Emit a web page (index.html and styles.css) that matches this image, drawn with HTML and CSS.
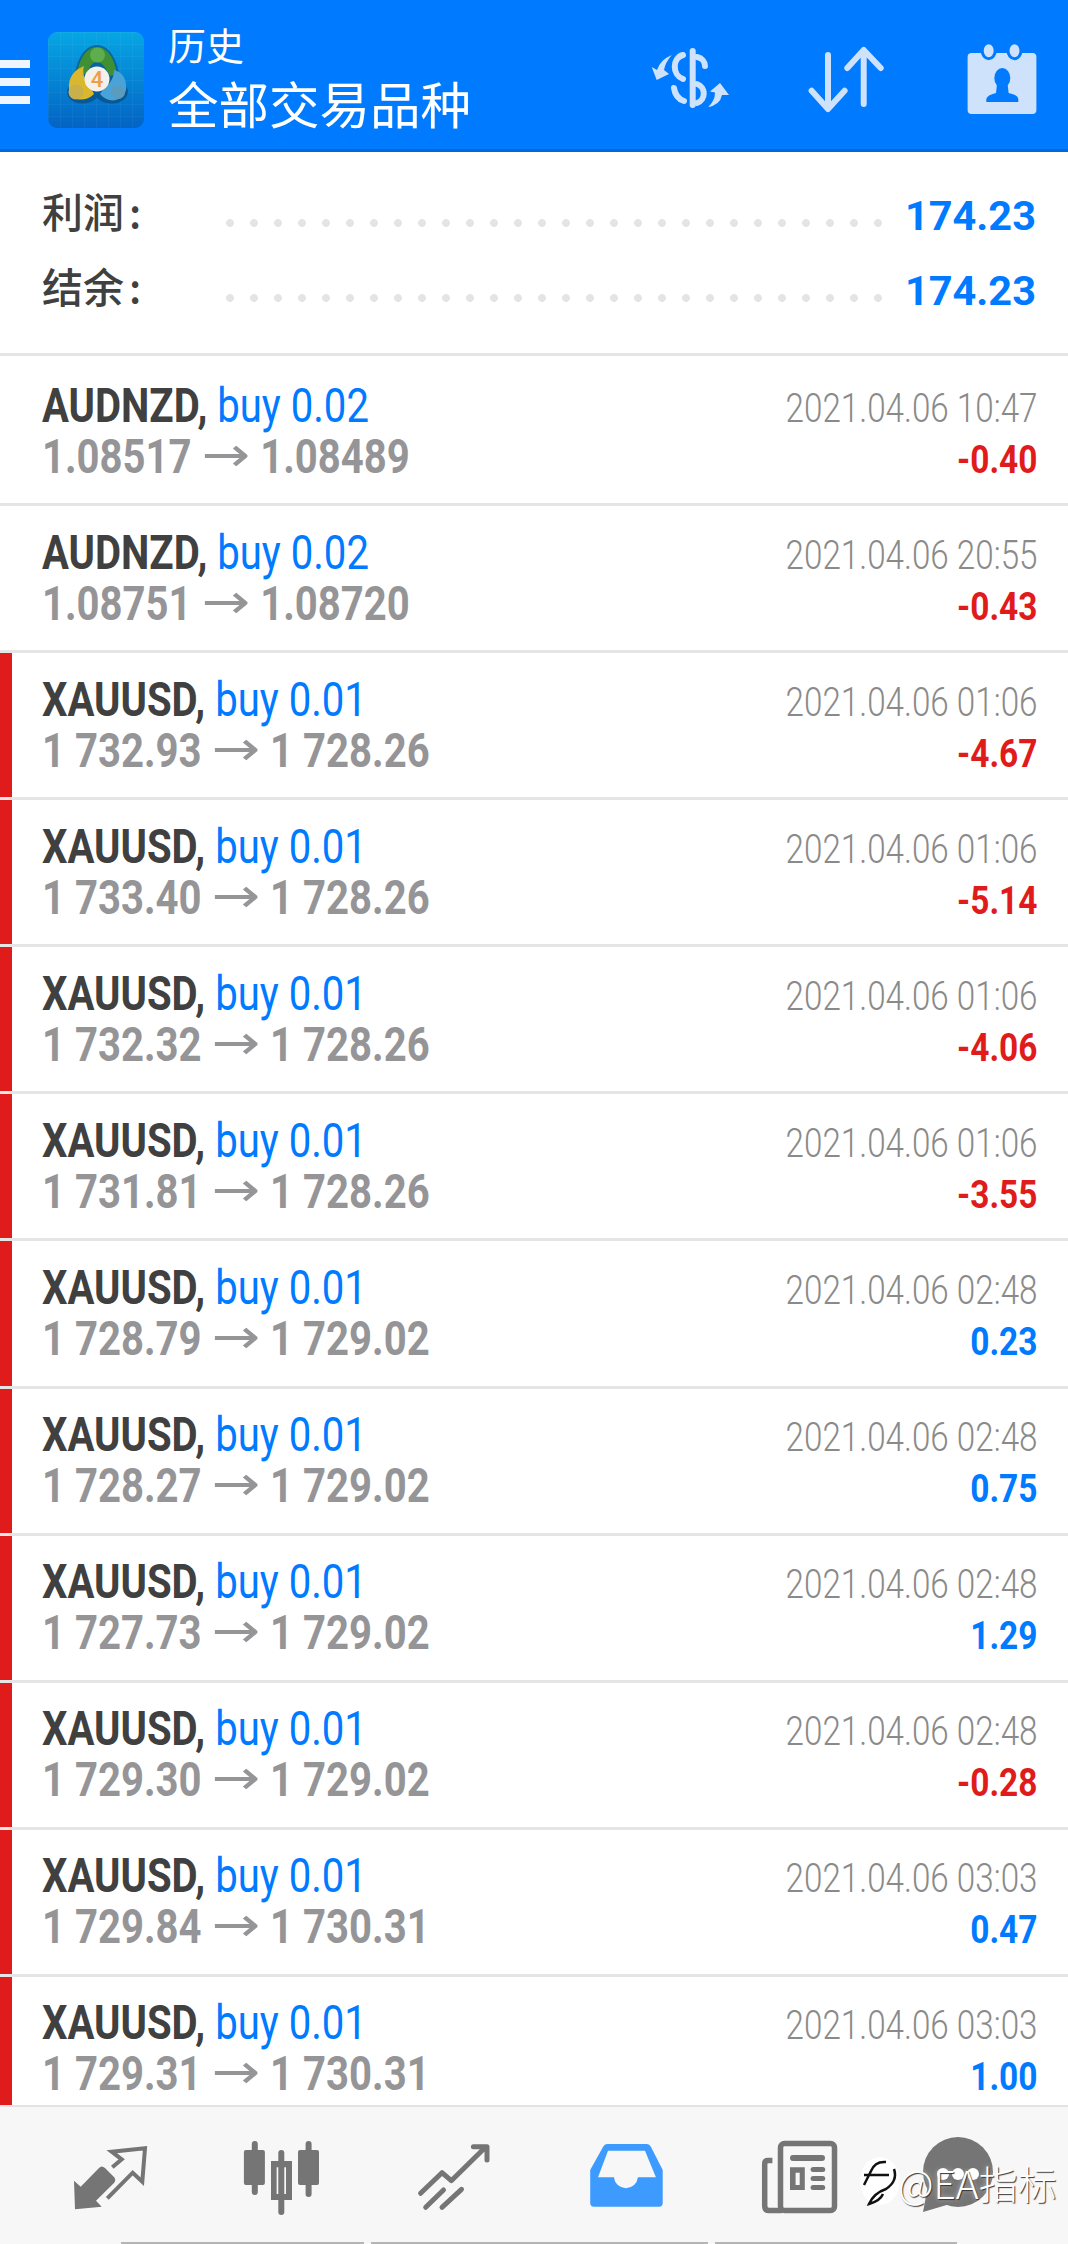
FILE: index.html
```html
<!DOCTYPE html>
<html lang="zh-CN">
<head>
    <meta charset="UTF-8">
    <meta name="viewport" content="width=device-width, initial-scale=1.0">
    <title>历史 - 全部交易品种</title>
    <link rel="stylesheet" href="styles.css">
</head>
<body>
    <div class="page">
        <header class="topbar">
            <div class="burger"><span></span><span></span><span></span></div>
            <svg class="logo" viewBox="0 0 96 96">
                <defs>
                    <linearGradient id="logoBg" x1="0" y1="0" x2="0" y2="1">
                        <stop offset="0" stop-color="#06a6e4"/>
                        <stop offset="1" stop-color="#0363c4"/>
                    </linearGradient>
                    <pattern id="logoGrid" width="12" height="12" patternUnits="userSpaceOnUse">
                        <path d="M12 0H0V12" fill="none" stroke="#ffffff" stroke-opacity=".08"/>
                    </pattern>
                </defs>
                <rect width="96" height="96" rx="9" fill="url(#logoBg)"/>
                <rect width="96" height="96" rx="9" fill="url(#logoGrid)"/>
                <path d="M49 13C37 13 29 27 27 43L19 58C18 72 38 76 49 66C60 76 81 72 80 58L71 43C69 27 61 13 49 13Z" fill="#0b3f66" opacity=".55"/>
                <path d="M49 15C38 15 31 28 29 42L38 42C42 34 45 30 49 30C54 30 58 36 62 44L69 42C67 28 60 15 49 15Z" fill="#3f8f35"/>
                <path d="M21 58C20 45 26 38 36 34C34 40 36 48 42 54L46 62C38 70 24 70 21 58Z" fill="#d9b82f"/>
                <path d="M78 58C79 46 74 40 66 38C66 46 62 52 56 56L52 62C60 72 74 70 78 58Z" fill="#4aa3d8"/>
                <circle cx="49.500" cy="23" r="7.500" fill="#5fae4e"/>
                <circle cx="28" cy="60" r="7.500" fill="#c9b04a"/>
                <circle cx="70" cy="60" r="7" fill="#5a9cc0"/>
                <circle cx="49" cy="47" r="12.500" fill="#f4f1ea"/>
                <text class="logo-num" x="49" y="55" text-anchor="middle">4</text>
            </svg>
            <div class="titles">
                <div class="title-small">历史</div>
                <div class="title-big">全部交易品种</div>
            </div>
            <svg class="act act-money" viewBox="0 0 130 100">
                <path class="act-fill" d="M31.700 25Q20 30 17 40L11.700 37L16.700 50L29 44L24 40Q25 33 31.700 25Z"/>
                <path class="act-fill" d="M68 77Q80 75 82 65L89 65L80 53L70 61.500L75 62.500Q75 71 68 77Z"/>
                <path class="act-line" d="M52.700 21V75"/>
                <path class="act-line" d="M43 25C32 28 32 45 43 49"/>
                <path class="act-line" d="M57 27C62 28 65 32 65 36"/>
                <path class="act-line" d="M57 54C66 57 66 70 57 73"/>
                <path class="act-line" d="M34 58C35 65 38 69 44 71"/>
            </svg>
            <svg class="act act-sort" viewBox="0 0 100 100">
                <path class="act-line" d="M28 25V78M11.600 60.700L28 79L44.600 60.700"/>
                <path class="act-line" d="M63.700 21V74M47.300 38L63.700 20L80.700 38"/>
            </svg>
            <svg class="act act-report" viewBox="0 0 84 100">
                <rect class="act-fill" x="7.600" y="23" width="68.800" height="61" rx="4"/>
                <ellipse class="act-ring" cx="28.700" cy="20.700" rx="6.500" ry="8"/>
                <ellipse class="act-ring" cx="54.500" cy="20.700" rx="6.500" ry="8"/>
                <ellipse class="act-hole" cx="42.300" cy="48" rx="8" ry="10"/>
                <path class="act-hole" d="M26.300 72V69Q27 65 36 63L37 54H47.600L48.600 63Q58 65 58.300 69V72Z"/>
            </svg>
        </header>

        <section class="summary">
            <div class="sum-row">
                <span class="sum-label">利润<span class="colon">:</span></span>
                <span class="leader"></span>
                <span class="sum-value">174.23</span>
            </div>
            <div class="sum-row">
                <span class="sum-label">结余<span class="colon">:</span></span>
                <span class="leader"></span>
                <span class="sum-value">174.23</span>
            </div>
        </section>

        <main class="deals">
            <div class="deal">
                <div class="deal-left">
                    <div class="deal-title"><b>AUDNZD,</b> <span class="side">buy 0.02</span></div>
                    <div class="deal-price">1.08517 <span class="arrow">→</span> 1.08489</div>
                </div>
                <div class="deal-right">
                    <div class="deal-time">2021.04.06 10:47</div>
                    <div class="deal-profit loss">-0.40</div>
                </div>
            </div>
            <div class="deal">
                <div class="deal-left">
                    <div class="deal-title"><b>AUDNZD,</b> <span class="side">buy 0.02</span></div>
                    <div class="deal-price">1.08751 <span class="arrow">→</span> 1.08720</div>
                </div>
                <div class="deal-right">
                    <div class="deal-time">2021.04.06 20:55</div>
                    <div class="deal-profit loss">-0.43</div>
                </div>
            </div>
            <div class="deal marked">
                <div class="deal-left">
                    <div class="deal-title"><b>XAUUSD,</b> <span class="side">buy 0.01</span></div>
                    <div class="deal-price">1 732.93 <span class="arrow">→</span> 1 728.26</div>
                </div>
                <div class="deal-right">
                    <div class="deal-time">2021.04.06 01:06</div>
                    <div class="deal-profit loss">-4.67</div>
                </div>
            </div>
            <div class="deal marked">
                <div class="deal-left">
                    <div class="deal-title"><b>XAUUSD,</b> <span class="side">buy 0.01</span></div>
                    <div class="deal-price">1 733.40 <span class="arrow">→</span> 1 728.26</div>
                </div>
                <div class="deal-right">
                    <div class="deal-time">2021.04.06 01:06</div>
                    <div class="deal-profit loss">-5.14</div>
                </div>
            </div>
            <div class="deal marked">
                <div class="deal-left">
                    <div class="deal-title"><b>XAUUSD,</b> <span class="side">buy 0.01</span></div>
                    <div class="deal-price">1 732.32 <span class="arrow">→</span> 1 728.26</div>
                </div>
                <div class="deal-right">
                    <div class="deal-time">2021.04.06 01:06</div>
                    <div class="deal-profit loss">-4.06</div>
                </div>
            </div>
            <div class="deal marked">
                <div class="deal-left">
                    <div class="deal-title"><b>XAUUSD,</b> <span class="side">buy 0.01</span></div>
                    <div class="deal-price">1 731.81 <span class="arrow">→</span> 1 728.26</div>
                </div>
                <div class="deal-right">
                    <div class="deal-time">2021.04.06 01:06</div>
                    <div class="deal-profit loss">-3.55</div>
                </div>
            </div>
            <div class="deal marked">
                <div class="deal-left">
                    <div class="deal-title"><b>XAUUSD,</b> <span class="side">buy 0.01</span></div>
                    <div class="deal-price">1 728.79 <span class="arrow">→</span> 1 729.02</div>
                </div>
                <div class="deal-right">
                    <div class="deal-time">2021.04.06 02:48</div>
                    <div class="deal-profit gain">0.23</div>
                </div>
            </div>
            <div class="deal marked">
                <div class="deal-left">
                    <div class="deal-title"><b>XAUUSD,</b> <span class="side">buy 0.01</span></div>
                    <div class="deal-price">1 728.27 <span class="arrow">→</span> 1 729.02</div>
                </div>
                <div class="deal-right">
                    <div class="deal-time">2021.04.06 02:48</div>
                    <div class="deal-profit gain">0.75</div>
                </div>
            </div>
            <div class="deal marked">
                <div class="deal-left">
                    <div class="deal-title"><b>XAUUSD,</b> <span class="side">buy 0.01</span></div>
                    <div class="deal-price">1 727.73 <span class="arrow">→</span> 1 729.02</div>
                </div>
                <div class="deal-right">
                    <div class="deal-time">2021.04.06 02:48</div>
                    <div class="deal-profit gain">1.29</div>
                </div>
            </div>
            <div class="deal marked">
                <div class="deal-left">
                    <div class="deal-title"><b>XAUUSD,</b> <span class="side">buy 0.01</span></div>
                    <div class="deal-price">1 729.30 <span class="arrow">→</span> 1 729.02</div>
                </div>
                <div class="deal-right">
                    <div class="deal-time">2021.04.06 02:48</div>
                    <div class="deal-profit loss">-0.28</div>
                </div>
            </div>
            <div class="deal marked">
                <div class="deal-left">
                    <div class="deal-title"><b>XAUUSD,</b> <span class="side">buy 0.01</span></div>
                    <div class="deal-price">1 729.84 <span class="arrow">→</span> 1 730.31</div>
                </div>
                <div class="deal-right">
                    <div class="deal-time">2021.04.06 03:03</div>
                    <div class="deal-profit gain">0.47</div>
                </div>
            </div>
            <div class="deal marked">
                <div class="deal-left">
                    <div class="deal-title"><b>XAUUSD,</b> <span class="side">buy 0.01</span></div>
                    <div class="deal-price">1 729.31 <span class="arrow">→</span> 1 730.31</div>
                </div>
                <div class="deal-right">
                    <div class="deal-time">2021.04.06 03:03</div>
                    <div class="deal-profit gain">1.00</div>
                </div>
            </div>
        </main>

        <nav class="tabs">
            <div class="tab-icons">
                <svg class="tab" viewBox="0 0 80 80">
                    <path class="tab-fill" d="M5 72.300L4 43.700L10.700 49.700L29 31Q31.700 28 35 31L44 40Q46.500 43 44 46L26 63.700L31.700 69.700Z"/>
                    <path class="tab-line sharp" d="M42.300 30.300L51.700 22.300L41.700 14.700L75 11.300L72.300 44.700L62.700 35.700L37.300 61.300"/>
                </svg>
                <svg class="tab" viewBox="1 0 80 80">
                    <path class="tab-line" d="M13.800 7V55M40.300 16V75M67.600 7V57"/>
                    <rect class="tab-fill" x="2.900" y="13" width="21" height="35" rx="2"/>
                    <rect class="tab-fill" x="57" y="13" width="21" height="35" rx="2"/>
                    <path class="tab-fill" fill-rule="evenodd" d="M30 24H51V63H30ZM35.600 30.300V57H45V30.300Z"/>
                </svg>
                <svg class="tab" viewBox="0 0 80 80">
                    <path class="tab-line thin" d="M6.600 56.300L28 35.700L37.300 43.700L71.400 10.300M59.400 9.700H73V23M11.700 70.300L29.500 53M28 70.300L47.500 52.300"/>
                </svg>
                <svg class="tab" viewBox="0 0 80 80">
                    <path class="tab-on" fill-rule="evenodd" d="M21 7H61Q63.500 7 65 10L76.700 33V66Q76.700 69.700 73 69.700H8Q4.200 69.700 4.200 66V33L17 10Q18.500 7 21 7ZM22 13.700H59L69.900 40.300H51.900A12 12 0 0 1 28 40.300H12Z"/>
                </svg>
                <svg class="tab" viewBox="-2 0 80 80">
                    <rect class="tab-stroke" x="20.500" y="6.500" width="54" height="67" rx="4"/>
                    <path class="tab-stroke" d="M12.400 23.500H8Q4.700 23.500 4.700 27V69Q4.700 73.500 9 73.500H22"/>
                    <rect class="tab-fill" x="30" y="18" width="35" height="6" rx="3"/>
                    <path class="tab-fill" fill-rule="evenodd" d="M30 30.300H44.800V53H30ZM35.600 35.700V48H39.700V35.700Z"/>
                    <rect class="tab-fill" x="50.600" y="30" width="14.600" height="5" rx="2.500"/>
                    <rect class="tab-fill" x="50.600" y="39" width="14.600" height="5" rx="2.500"/>
                    <rect class="tab-fill" x="50.600" y="48" width="14.600" height="5" rx="2.500"/>
                </svg>
                <svg class="tab tab-chat" viewBox="0 0 80 80">
                    <circle class="tab-fill" cx="40" cy="35" r="35"/>
                    <path class="tab-fill" d="M10 48L5 75L32 67Z"/>
                    <circle class="tab-dot" cx="25" cy="37" r="6"/>
                    <circle class="tab-dot" cx="40" cy="37" r="6"/>
                    <circle class="tab-dot" cx="55" cy="37" r="6"/>
                </svg>
            </div>
            <div class="tab-lines"><span></span><span></span><span></span></div>
            <div class="watermark">
                <svg class="wm-logo" viewBox="0 0 40 50">
                    <ellipse cx="20" cy="24" rx="20" ry="24" fill="#ffffff" opacity=".92"/>
                    <path class="wm-stroke" d="M26 5Q15 4 11 14L4 28M4 18H29M34 12Q38 24 26 32Q14 36 9 47Q20 44 23 37"/>
                </svg>
                <span class="wm-text">@EA指标</span>
            </div>
        </nav>
    </div>
</body>
</html>
```

FILE: styles.css
```css
body {
    margin: 0;
    background: #ffffff;
    font-family: Roboto, "Noto Sans CJK SC", sans-serif;
    color: #404040;
}

.page {
    display: flex;
    flex-direction: column;
    width: 1068px;
    height: 2244px;
    overflow: hidden;
}

/* top bar */
.topbar {
    display: flex;
    align-items: flex-start;
    flex: none;
    height: 152px;
    box-sizing: border-box;
    padding-top: 30px;
    background: #007aff;
    border-bottom: 3px solid #0069da;
}

.burger {
    display: flex;
    flex-direction: column;
    gap: 10px;
    width: 30px;
    margin-top: 30px;
}

.burger span {
    height: 8px;
    background: #eef5ff;
}

.logo {
    flex: none;
    width: 96px;
    height: 96px;
    margin-left: 18px;
    margin-top: 2px;
}

.logo-num {
    font-family: Roboto, sans-serif;
    font-size: 22px;
    font-weight: 500;
    fill: #ef9d47;
}

.titles {
    flex: none;
    width: 472px;
    margin-left: 24px;
    color: #ffffff;
    font-family: "Noto Sans CJK SC", sans-serif;
}

.title-small {
    font-size: 38px;
    line-height: 42px;
    margin-top: -7px;
}

.title-big {
    font-size: 50.500px;
    line-height: 62px;
    margin-top: 6px;
}

.act {
    flex: none;
    height: 100px;
}

.act-money {
    width: 130px;
}

.act-sort {
    width: 100px;
    margin-left: 30px;
}

.act-report {
    width: 84px;
    margin-left: 60px;
}

.act-fill {
    fill: #cfe2fb;
}

.act-line {
    fill: none;
    stroke: #cfe2fb;
    stroke-width: 6;
    stroke-linecap: round;
    stroke-linejoin: round;
}

.act-ring {
    fill: #cfe2fb;
    stroke: #007aff;
    stroke-width: 3;
}

.act-hole {
    fill: #007aff;
}

/* totals */
.summary {
    flex: none;
    height: 204px;
    box-sizing: border-box;
    padding: 26px 32px 0 42px;
    border-bottom: 3px solid #e5e5e5;
}

.sum-row {
    display: flex;
    height: 75px;
}

.sum-label {
    flex: none;
    width: 184px;
    font-family: "Noto Sans CJK SC", sans-serif;
    font-size: 41px;
    font-weight: 500;
    line-height: 65px;
}

.colon {
    margin-left: 5px;
}

.leader {
    flex: none;
    width: 672px;
    height: 75px;
    background-image: radial-gradient(circle at 4px 45px, #e4e4e4 3.6px, transparent 4.2px);
    background-size: 24px 75px;
    background-repeat: repeat-x;
}

.sum-value {
    margin-left: auto;
    color: #007aff;
    font-size: 41.500px;
    font-weight: 700;
    line-height: 75px;
}

/* deal list */
.deals {
    flex: 1;
    overflow: hidden;
}

.deal {
    display: flex;
    justify-content: space-between;
    height: 147.100px;
    box-sizing: border-box;
    padding: 20.500px 31px 0 42px;
    border-bottom: 3px solid #e5e5e5;
}

.deal:first-child {
    height: 150px;
    padding-top: 24px;
}

.deal.marked {
    box-shadow: inset 12px 0 0 #e01b1b;
}

.deal-left,
.deal-right {
    width: 500px;
}

.deal-title,
.deal-price {
    font-size: 48px;
    line-height: 51px;
    white-space: nowrap;
    transform: scaleX(.835);
    transform-origin: left center;
}

.deal-title b {
    font-weight: 700;
    color: #404040;
}

.side {
    color: #007aff;
}

.deal-price {
    font-weight: 700;
    color: #959598;
}

.arrow {
    display: inline-block;
    margin: 0 9px;
    font-family: "DejaVu Sans", sans-serif;
    font-weight: 400;
    transform: translateY(-2px) scaleX(1.45);
}

.deal-right {
    text-align: right;
    margin-top: 3px;
}

.deal-time,
.deal-profit {
    line-height: 51px;
    white-space: nowrap;
    transform-origin: right center;
}

.deal-time {
    font-size: 40px;
    font-weight: 300;
    color: #8a8a8a;
    transform: scaleX(.83);
}

.deal-profit {
    font-size: 38px;
    font-weight: 700;
    transform: scaleX(.88);
    margin-top: 1px;
}

.loss {
    color: #e01b1b;
}

.gain {
    color: #007aff;
}

/* bottom tabs */
.tabs {
    position: relative;
    flex: none;
    height: 139px;
    box-sizing: border-box;
    background: #f7f7f7;
    border-top: 2px solid #e3e3e3;
}

.tab-icons {
    display: flex;
    gap: 92px;
    height: 80px;
    padding: 30px 0 25px 70px;
}

.tab {
    flex: none;
    width: 80px;
    height: 80px;
}

.tab-chat {
    margin-left: -12px;
}

.tab-fill {
    fill: #757575;
}

.tab-line {
    fill: none;
    stroke: #757575;
    stroke-width: 6;
    stroke-linecap: round;
    stroke-linejoin: round;
}

.tab-line.sharp {
    stroke-width: 4;
    stroke-linecap: butt;
    stroke-linejoin: miter;
}

.tab-line.thin {
    stroke-width: 5;
}

.tab-stroke {
    fill: none;
    stroke: #757575;
    stroke-width: 5.500;
}

.tab-on {
    fill: #3d9bff;
}

.tab-dot {
    fill: #ffffff;
}

.tab-lines {
    display: flex;
    gap: 7px;
    margin-left: 121px;
}

.tab-lines span {
    height: 2px;
    background: #b5b5b5;
}

.tab-lines span:nth-child(1) {
    width: 243px;
}

.tab-lines span:nth-child(2) {
    width: 337px;
}

.tab-lines span:nth-child(3) {
    width: 242px;
}

/* watermark over the tab bar */
.watermark {
    position: absolute;
    left: 860px;
    top: 50px;
    display: flex;
    align-items: center;
    color: #ffffff;
}

.wm-logo {
    width: 40px;
    height: 50px;
    margin-right: -2px;
}

.wm-stroke {
    fill: none;
    stroke: #111111;
    stroke-width: 2.500;
}

.wm-text {
    font-family: "Noto Sans CJK SC", sans-serif;
    font-size: 39px;
    font-weight: 300;
    line-height: 50px;
    white-space: nowrap;
    text-shadow: 1px 1px 1px #333333, 0 0 5px rgba(255, 255, 255, .5);
}
```
